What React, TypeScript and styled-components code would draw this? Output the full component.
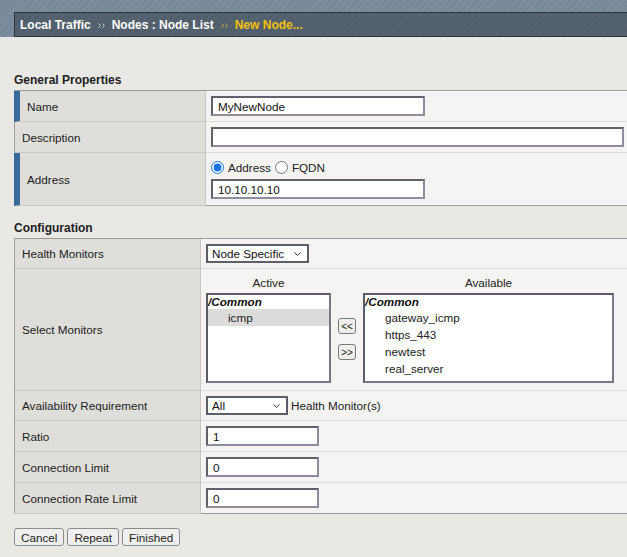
import React from "react";
import styled, { createGlobalStyle } from "styled-components";

const BASE = "11.7px";

const GlobalStyle = createGlobalStyle`
  html, body { margin: 0; padding: 0; }
  body {
    background: #e9e8e4;
    font-family: "Liberation Sans", Arial, sans-serif;
    font-size: ${BASE};
    color: #222;
    overflow: hidden;
  }
  * { box-sizing: border-box; }
`;

const Banner = styled.div`
  height: 37px;
  padding-top: 12px;
  background-color: #76889a;
  background-image: repeating-linear-gradient(
    135deg,
    rgba(255, 255, 255, 0.05) 0px,
    rgba(255, 255, 255, 0.05) 2px,
    rgba(0, 0, 0, 0) 2px,
    rgba(0, 0, 0, 0) 5px
  );
`;

const Crumbs = styled.div`
  margin-left: 14px;
  height: 25px;
  display: flex;
  align-items: center;
  gap: 7px;
  padding-left: 5px;
  background-color: #515e6b;
  background-image: repeating-linear-gradient(
    135deg,
    rgba(255, 255, 255, 0.03) 0px,
    rgba(255, 255, 255, 0.03) 2px,
    rgba(0, 0, 0, 0) 2px,
    rgba(0, 0, 0, 0) 5px
  );
  border-top: 1px solid #2f3439;
  border-bottom: 1px solid #2f3439;
  border-left: 1px solid #2f3439;
`;

const Crumb = styled.span<{ $current?: boolean }>`
  font-weight: bold;
  font-size: 12px;
  color: ${(p) => (p.$current ? "#f4c20d" : "#ffffff")};
`;

const Sep = styled.span`
  display: flex;
  gap: 1px;
  align-items: center;
  padding-top: 1px;
`;

const Content = styled.div`
  padding: 36px 0 0 14px;
`;

const SectionTitle = styled.div<{ $top?: number }>`
  font-weight: bold;
  font-size: 12px;
  line-height: 14px;
  color: #222;
  margin-top: ${(p) => p.$top ?? 0}px;
  margin-bottom: 3px;
`;

const FormTable = styled.div`
  border-top: 1px solid #9c9c9a;
  border-bottom: 1px solid #9c9c9a;
  background: #f5f4f2;
`;

const Row = styled.div<{ $label: number; $last?: boolean }>`
  display: grid;
  grid-template-columns: ${(p) => p.$label}px 1fr;
  min-height: 30px;
  border-bottom: ${(p) => (p.$last ? "none" : "1px solid #dcdbd7")};
`;

const LabelCell = styled.div<{ $required?: boolean }>`
  display: flex;
  align-items: center;
  background: #dfdeda;
  border-left: ${(p) => (p.$required ? "6px solid #386b9c" : "1px solid #9c9c9a")};
  border-right: 1px solid #c6c5c1;
  padding-left: 7px;
  margin-bottom: -1px;
  border-bottom: 1px solid #c9c8c4;
`;

const ValueCell = styled.div<{ $column?: boolean }>`
  display: flex;
  flex-direction: ${(p) => (p.$column ? "column" : "row")};
  align-items: ${(p) => (p.$column ? "flex-start" : "center")};
  gap: 3px;
  padding: ${(p) => (p.$column ? "5px 5px 6px" : "5px")};
`;

const TextInput = styled.input<{ $width: number }>`
  width: ${(p) => p.$width}px;
  height: 20px;
  background: #fff;
  border: 2px solid;
  border-color: #62606c #8e8c9e #8e8c9e #62606c;
  font-family: "Liberation Sans", Arial, sans-serif;
  font-size: ${BASE};
  color: #111;
  padding: 0 5px;
  margin: 0;
  outline: none;
`;

const RadioLine = styled.div`
  display: flex;
  align-items: center;
  height: 18px;
  gap: 4px;
`;

const Radio = styled.input`
  width: 13px;
  height: 13px;
  margin: 0;
  accent-color: #1a73e8;
`;

const RadioText = styled.span`
  font-size: ${BASE};
  color: #222;
`;

const SelectWrap = styled.div<{ $width: number }>`
  position: relative;
  width: ${(p) => p.$width}px;
  height: 19px;
  flex: none;
`;

const SelectBox = styled.select`
  appearance: none;
  -webkit-appearance: none;
  width: 100%;
  height: 100%;
  background: #fff;
  border: 2px solid #5e5d6a;
  border-radius: 0;
  font-family: "Liberation Sans", Arial, sans-serif;
  font-size: ${BASE};
  color: #111;
  padding: 0 0 0 4px;
  margin: 0;
  outline: none;
`;

const Chevron = styled.svg`
  position: absolute;
  right: 8px;
  top: 8px;
  pointer-events: none;
`;

const Suffix = styled.span`
  font-size: ${BASE};
  color: #222;
`;

const Monitors = styled.div`
  display: flex;
  align-items: flex-end;
  padding: 7px 5px;
`;

const ListColumn = styled.div<{ $width: number }>`
  width: ${(p) => p.$width}px;
  display: flex;
  flex-direction: column;
  gap: 3px;
`;

const ListCaption = styled.div`
  text-align: center;
  line-height: 14px;
  font-size: ${BASE};
  color: #222;
`;

const ListBox = styled.div`
  height: 90px;
  background: #fff;
  border: 2px solid;
  border-color: #5b5a68 #787788 #787788 #5b5a68;
  overflow: hidden;
`;

const GroupLabel = styled.div`
  font-weight: bold;
  font-style: italic;
  line-height: 14px;
  font-size: ${BASE};
  color: #111;
`;

const ListItem = styled.div<{ $selected?: boolean }>`
  line-height: 17px;
  height: 17px;
  padding-left: 20px;
  font-size: ${BASE};
  color: #222;
  background: ${(p) => (p.$selected ? "#dcdcdb" : "transparent")};
`;

const MoveColumn = styled.div`
  width: 32px;
  height: 90px;
  display: flex;
  flex-direction: column;
  align-items: center;
  justify-content: center;
  gap: 10px;
  padding-top: 2px;
`;

const MoveButton = styled.button`
  width: 18px;
  height: 16px;
  padding: 0;
  margin: 0;
  border: 1px solid #7a7a7a;
  border-radius: 3px;
  background: #efefee;
  font-family: "Liberation Sans", Arial, sans-serif;
  font-size: 10px;
  color: #222;
  line-height: 13px;
`;

const ButtonBar = styled.div`
  display: flex;
  gap: 3px;
  margin-top: 14px;
`;

const ActionButton = styled.button`
  height: 18px;
  padding: 0 6px;
  margin: 0;
  border: 1px solid #8c8c8c;
  border-radius: 3px;
  background: #efefed;
  font-family: "Liberation Sans", Arial, sans-serif;
  font-size: ${BASE};
  color: #222;
  line-height: 15px;
`;

const SepMark = ({ color }: { color: string }) => (
  <svg width="3" height="5" viewBox="0 0 3 5">
    <path d="M0.5 0.5 L2.5 2.5 L0.5 4.5" fill="none" stroke={color} strokeWidth="1" />
  </svg>
);

const Separator = ({ current }: { current?: boolean }) => {
  const c = current ? "#d6b23a" : "#c9ced3";
  return (
    <Sep>
      <SepMark color={c} />
      <SepMark color={c} />
    </Sep>
  );
};

const Select = ({ width, label }: { width: number; label: string }) => (
  <SelectWrap $width={width}>
    <SelectBox defaultValue="v">
      <option value="v">{label}</option>
    </SelectBox>
    <Chevron width="7" height="4" viewBox="0 0 7 4">
      <path d="M0.5 0.5 L3.5 3.3 L6.5 0.5" fill="none" stroke="#333" strokeWidth="1" />
    </Chevron>
  </SelectWrap>
);

const available = ["gateway_icmp", "https_443", "newtest", "real_server", "secure_tcp"];

export default function App() {
  return (
    <>
      <GlobalStyle />
      <Banner>
        <Crumbs>
          <Crumb>Local Traffic</Crumb>
          <Separator />
          <Crumb>Nodes : Node List</Crumb>
          <Separator current />
          <Crumb $current>New Node...</Crumb>
        </Crumbs>
      </Banner>
      <Content>
        <SectionTitle>General Properties</SectionTitle>
        <FormTable>
          <Row $label={192}>
            <LabelCell $required>Name</LabelCell>
            <ValueCell>
              <TextInput $width={214} defaultValue="MyNewNode" />
            </ValueCell>
          </Row>
          <Row $label={192}>
            <LabelCell>Description</LabelCell>
            <ValueCell>
              <TextInput $width={413} defaultValue="" />
            </ValueCell>
          </Row>
          <Row $label={192} $last>
            <LabelCell $required>Address</LabelCell>
            <ValueCell $column>
              <RadioLine>
                <Radio type="radio" name="addrtype" defaultChecked />
                <RadioText>Address</RadioText>
                <Radio type="radio" name="addrtype" />
                <RadioText>FQDN</RadioText>
              </RadioLine>
              <TextInput $width={214} defaultValue="10.10.10.10" />
            </ValueCell>
          </Row>
        </FormTable>

        <SectionTitle $top={15}>Configuration</SectionTitle>
        <FormTable>
          <Row $label={187}>
            <LabelCell>Health Monitors</LabelCell>
            <ValueCell>
              <Select width={103} label="Node Specific" />
            </ValueCell>
          </Row>
          <Row $label={187}>
            <LabelCell>Select Monitors</LabelCell>
            <Monitors>
              <ListColumn $width={125}>
                <ListCaption>Active</ListCaption>
                <ListBox>
                  <GroupLabel>/Common</GroupLabel>
                  <ListItem $selected>icmp</ListItem>
                </ListBox>
              </ListColumn>
              <MoveColumn>
                <MoveButton>&lt;&lt;</MoveButton>
                <MoveButton>&gt;&gt;</MoveButton>
              </MoveColumn>
              <ListColumn $width={251}>
                <ListCaption>Available</ListCaption>
                <ListBox>
                  <GroupLabel>/Common</GroupLabel>
                  {available.map((m) => (
                    <ListItem key={m}>{m}</ListItem>
                  ))}
                </ListBox>
              </ListColumn>
            </Monitors>
          </Row>
          <Row $label={187}>
            <LabelCell>Availability Requirement</LabelCell>
            <ValueCell>
              <Select width={82} label="All" />
              <Suffix>Health Monitor(s)</Suffix>
            </ValueCell>
          </Row>
          <Row $label={187}>
            <LabelCell>Ratio</LabelCell>
            <ValueCell>
              <TextInput $width={113} defaultValue="1" />
            </ValueCell>
          </Row>
          <Row $label={187}>
            <LabelCell>Connection Limit</LabelCell>
            <ValueCell>
              <TextInput $width={113} defaultValue="0" />
            </ValueCell>
          </Row>
          <Row $label={187} $last>
            <LabelCell>Connection Rate Limit</LabelCell>
            <ValueCell>
              <TextInput $width={113} defaultValue="0" />
            </ValueCell>
          </Row>
        </FormTable>

        <ButtonBar>
          <ActionButton>Cancel</ActionButton>
          <ActionButton>Repeat</ActionButton>
          <ActionButton>Finished</ActionButton>
        </ButtonBar>
      </Content>
    </>
  );
}
